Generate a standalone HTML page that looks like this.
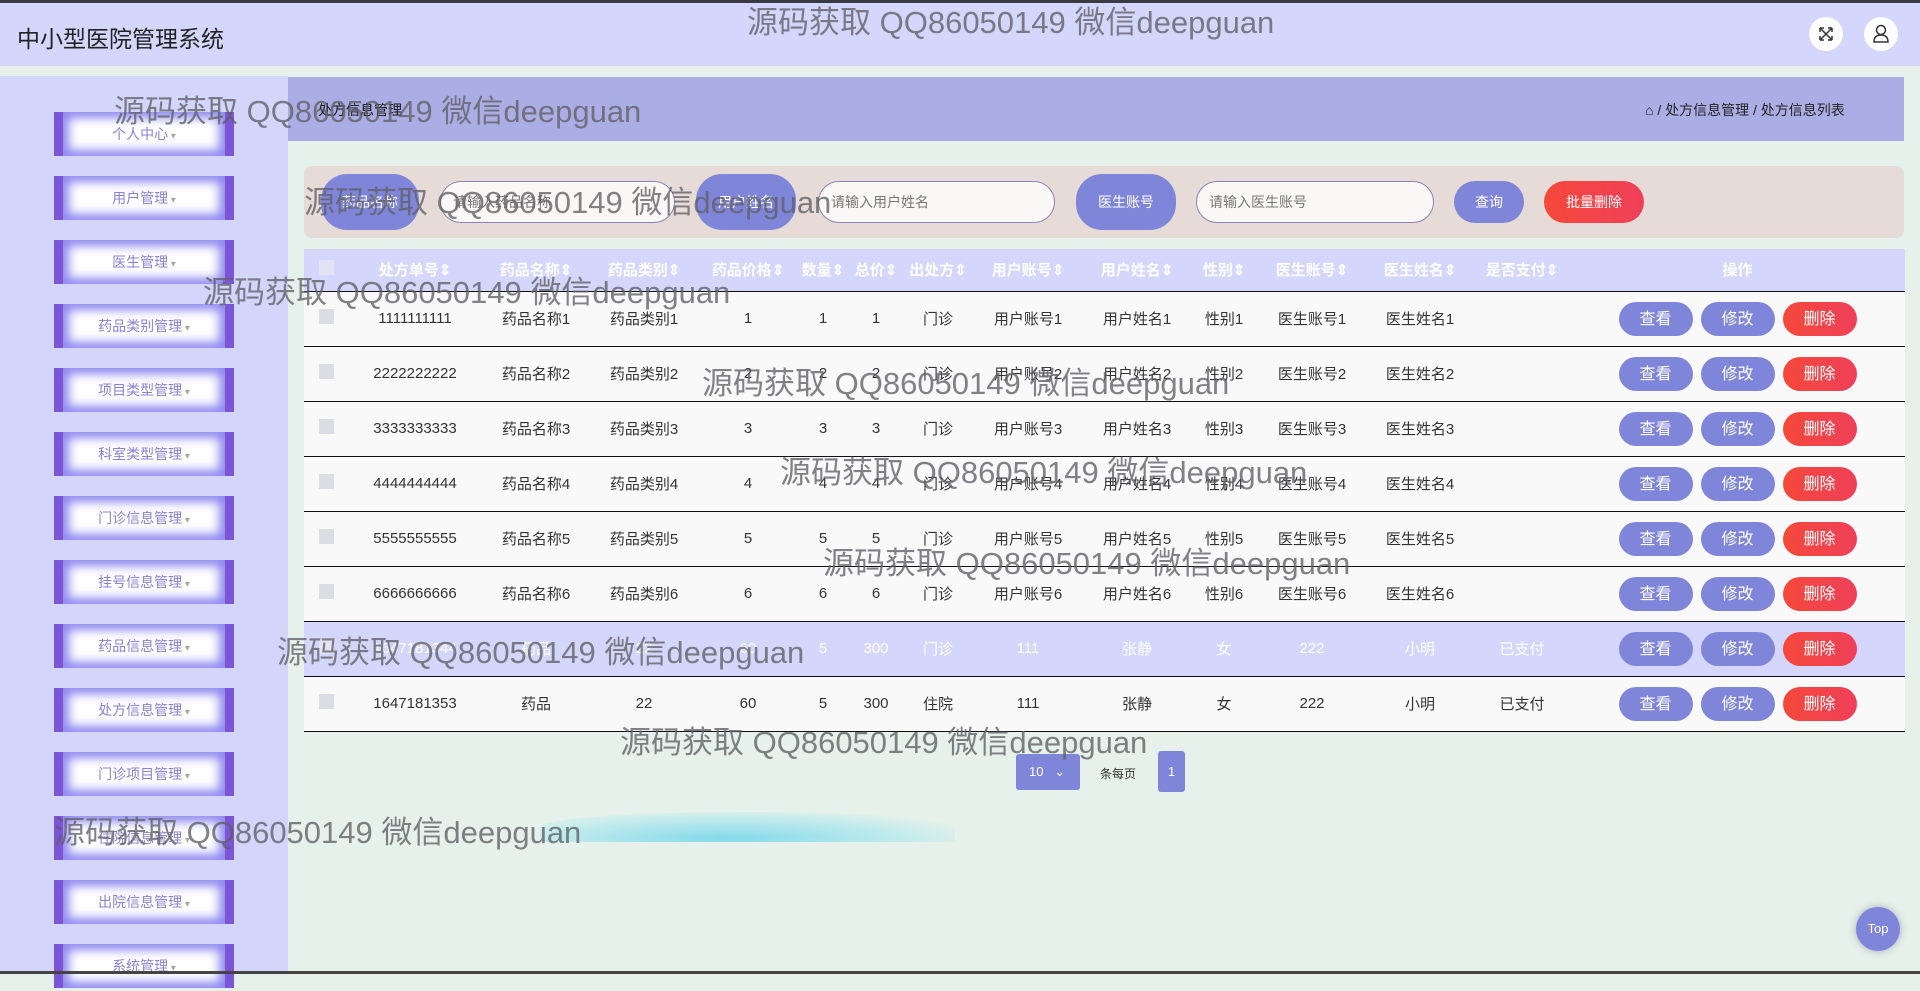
<!DOCTYPE html>
<html><head><meta charset="utf-8"><style>
*{box-sizing:border-box;margin:0;padding:0}
body{width:1920px;height:974px;overflow:hidden;background:#e5f1ea;font-family:"Liberation Sans","Noto Sans CJK SC",sans-serif;position:relative}
.a{position:absolute}
.hdr{left:0;top:0;width:1920px;height:66px;background:#d4d6fb;border-top:3px solid #3a3a44}
.title{left:17px;top:20px;font-size:23px;color:#222}
.ic{width:34px;height:34px;border-radius:50%;background:#fff;top:17px}
.side{left:0;top:76px;width:288px;height:898px;background:#d3d5fb}
.mi{left:54px;width:180px;height:44px;background:#fff;border-left:9px solid #7b55d6;border-right:9px solid #7b55d6;box-shadow:inset 0 0 10px 6px #8e88f0;color:#8a80d4;font-size:14px;text-align:center;line-height:44px}
.mi:after{content:" ▾";font-size:10px;color:#aaa}
.bc{left:288px;top:77px;width:1616px;height:64px;background:#abaee4}
.srch{left:304px;top:166px;width:1600px;height:72px;background:#e6dbd6;border-radius:8px}
.pill{background:#7f86d9;color:#fff;font-size:14px;text-align:center;border-radius:26px}
.inp{background:#faf8f6;border:1px solid #8a82b8;border-radius:22px;font-size:14px;color:#777;padding-left:12px;line-height:41px}
.wm{font-size:31px;color:rgba(95,95,100,.78);white-space:nowrap;z-index:10;font-family:"Liberation Sans","Noto Sans CJK SC",sans-serif}
table{position:absolute;left:304px;top:249px;width:1601px;border-collapse:collapse;font-size:15px;color:#333}
th{height:42px;background:#d4d6fb;color:#fff;font-weight:bold;font-size:15px}
td{height:55px;background:#f9f9f9;border-top:1px solid #111;border-bottom:1px solid #111;text-align:center}
tr.hl td{background:#d4d6fb;color:#fff}
.cb{display:inline-block;width:15px;height:15px;background:#dcdde2}
.b{display:inline-block;width:74px;height:34px;line-height:36px;border-radius:17px;color:#fff;background:#7f86d9;margin:0 4px;font-size:16px}
.r{background:linear-gradient(90deg,#f5483a,#f0405a)}
</style></head><body>
<div class="a hdr"></div>
<div class="a title">中小型医院管理系统</div>
<div class="a ic" style="left:1809px"><svg width="34" height="34"><path d="M11 11l12 12M23 11L11 23M11 11h4M11 11v4M23 23h-4M23 23v-4M23 11h-4M23 11v4M11 23h4M11 23v-4" stroke="#333" stroke-width="1.5" fill="none"/></svg></div>
<div class="a ic" style="left:1864px"><svg width="34" height="34"><circle cx="17" cy="13" r="4.5" stroke="#333" stroke-width="1.5" fill="none"/><path d="M10 25q0-7 7-7t7 7z" stroke="#333" stroke-width="1.5" fill="none"/></svg></div>
<div class="a side"></div>
<div class="a mi" style="top:112px">个人中心</div>
<div class="a mi" style="top:176px">用户管理</div>
<div class="a mi" style="top:240px">医生管理</div>
<div class="a mi" style="top:304px">药品类别管理</div>
<div class="a mi" style="top:368px">项目类型管理</div>
<div class="a mi" style="top:432px">科室类型管理</div>
<div class="a mi" style="top:496px">门诊信息管理</div>
<div class="a mi" style="top:560px">挂号信息管理</div>
<div class="a mi" style="top:624px">药品信息管理</div>
<div class="a mi" style="top:688px">处方信息管理</div>
<div class="a mi" style="top:752px">门诊项目管理</div>
<div class="a mi" style="top:816px">住院信息管理</div>
<div class="a mi" style="top:880px">出院信息管理</div>
<div class="a mi" style="top:944px">系统管理</div>
<div class="a bc"></div>
<div class="a" style="left:318px;top:100px;font-size:14px;color:#111">处方信息管理</div>
<div class="a" style="left:1645px;top:100px;font-size:14px;color:#222">⌂ / 处方信息管理 / 处方信息列表</div>
<div class="a srch"></div>
<div class="a pill" style="left:321px;top:174px;width:98px;height:56px;line-height:56px">药品名称</div>
<div class="a inp" style="left:440px;top:181px;width:235px;height:42px">请输入药品名称</div>
<div class="a pill" style="left:696px;top:174px;width:100px;height:56px;line-height:56px">用户姓名</div>
<div class="a inp" style="left:818px;top:181px;width:237px;height:42px">请输入用户姓名</div>
<div class="a pill" style="left:1076px;top:174px;width:100px;height:56px;line-height:56px">医生账号</div>
<div class="a inp" style="left:1196px;top:181px;width:238px;height:42px">请输入医生账号</div>
<div class="a pill" style="left:1454px;top:181px;width:70px;height:42px;line-height:42px">查询</div>
<div class="a pill" style="left:1544px;top:181px;width:100px;height:42px;line-height:42px;background:linear-gradient(90deg,#f5483a,#f0405a)">批量删除</div>
<table>
<tr><th style="width:44px"><span class="cb" style="background:#e2e3f5"></span></th><th style="width:134px">处方单号⇕</th><th style="width:108px">药品名称⇕</th><th style="width:108px">药品类别⇕</th><th style="width:100px">药品价格⇕</th><th style="width:50px">数量⇕</th><th style="width:56px">总价⇕</th><th style="width:68px">出处方⇕</th><th style="width:112px">用户账号⇕</th><th style="width:106px">用户姓名⇕</th><th style="width:68px">性别⇕</th><th style="width:108px">医生账号⇕</th><th style="width:108px">医生姓名⇕</th><th style="width:96px">是否支付⇕</th><th>操作</th></tr>
<tr><td><span class="cb"></span></td><td>1111111111</td><td>药品名称1</td><td>药品类别1</td><td>1</td><td>1</td><td>1</td><td>门诊</td><td>用户账号1</td><td>用户姓名1</td><td>性别1</td><td>医生账号1</td><td>医生姓名1</td><td></td><td><span class="b">查看</span><span class="b">修改</span><span class="b r">删除</span></td></tr>
<tr><td><span class="cb"></span></td><td>2222222222</td><td>药品名称2</td><td>药品类别2</td><td>2</td><td>2</td><td>2</td><td>门诊</td><td>用户账号2</td><td>用户姓名2</td><td>性别2</td><td>医生账号2</td><td>医生姓名2</td><td></td><td><span class="b">查看</span><span class="b">修改</span><span class="b r">删除</span></td></tr>
<tr><td><span class="cb"></span></td><td>3333333333</td><td>药品名称3</td><td>药品类别3</td><td>3</td><td>3</td><td>3</td><td>门诊</td><td>用户账号3</td><td>用户姓名3</td><td>性别3</td><td>医生账号3</td><td>医生姓名3</td><td></td><td><span class="b">查看</span><span class="b">修改</span><span class="b r">删除</span></td></tr>
<tr><td><span class="cb"></span></td><td>4444444444</td><td>药品名称4</td><td>药品类别4</td><td>4</td><td>4</td><td>4</td><td>门诊</td><td>用户账号4</td><td>用户姓名4</td><td>性别4</td><td>医生账号4</td><td>医生姓名4</td><td></td><td><span class="b">查看</span><span class="b">修改</span><span class="b r">删除</span></td></tr>
<tr><td><span class="cb"></span></td><td>5555555555</td><td>药品名称5</td><td>药品类别5</td><td>5</td><td>5</td><td>5</td><td>门诊</td><td>用户账号5</td><td>用户姓名5</td><td>性别5</td><td>医生账号5</td><td>医生姓名5</td><td></td><td><span class="b">查看</span><span class="b">修改</span><span class="b r">删除</span></td></tr>
<tr><td><span class="cb"></span></td><td>6666666666</td><td>药品名称6</td><td>药品类别6</td><td>6</td><td>6</td><td>6</td><td>门诊</td><td>用户账号6</td><td>用户姓名6</td><td>性别6</td><td>医生账号6</td><td>医生姓名6</td><td></td><td><span class="b">查看</span><span class="b">修改</span><span class="b r">删除</span></td></tr>
<tr class="hl"><td><span class="cb" style="background:#e2e3f5"></span></td><td>1647181344</td><td>药品</td><td>22</td><td>60</td><td>5</td><td>300</td><td>门诊</td><td>111</td><td>张静</td><td>女</td><td>222</td><td>小明</td><td>已支付</td><td><span class="b">查看</span><span class="b">修改</span><span class="b r">删除</span></td></tr>
<tr><td><span class="cb"></span></td><td>1647181353</td><td>药品</td><td>22</td><td>60</td><td>5</td><td>300</td><td>住院</td><td>111</td><td>张静</td><td>女</td><td>222</td><td>小明</td><td>已支付</td><td><span class="b">查看</span><span class="b">修改</span><span class="b r">删除</span></td></tr>
</table>
<div class="a" style="left:1016px;top:754px;width:64px;height:36px;background:#7f86d9;border-radius:3px;color:#fff;font-size:13px;line-height:36px;padding-left:13px">10 &nbsp;&nbsp;⌄</div>
<div class="a" style="left:1100px;top:765px;font-size:12px;color:#333">条每页</div>
<div class="a" style="left:1158px;top:751px;width:27px;height:41px;background:#7f86d9;border-radius:3px;color:#fff;font-size:13px;line-height:41px;text-align:center">1</div>
<div class="a" style="left:540px;top:812px;width:415px;height:30px;border-radius:50% 50% 0 0;background:radial-gradient(ellipse at 45% 90%,rgba(120,215,235,.9),rgba(160,230,240,.4) 60%,rgba(200,240,245,0) 80%)"></div>
<div class="a" style="left:1856px;top:907px;width:44px;height:44px;border-radius:50%;background:#7f86d9;box-shadow:0 0 8px #aab;color:#fff;font-size:13px;text-align:center;line-height:44px">Top</div>
<div class="a" style="left:0;top:971px;width:1920px;height:3px;background:#444"></div>
<div class="a wm" style="left:747px;top:-3px">源码获取 QQ86050149 微信deepguan</div>
<div class="a wm" style="left:114px;top:86px">源码获取 QQ86050149 微信deepguan</div>
<div class="a wm" style="left:304px;top:177px">源码获取 QQ86050149 微信deepguan</div>
<div class="a wm" style="left:203px;top:267px">源码获取 QQ86050149 微信deepguan</div>
<div class="a wm" style="left:702px;top:358px">源码获取 QQ86050149 微信deepguan</div>
<div class="a wm" style="left:780px;top:447px">源码获取 QQ86050149 微信deepguan</div>
<div class="a wm" style="left:823px;top:538px">源码获取 QQ86050149 微信deepguan</div>
<div class="a wm" style="left:277px;top:627px">源码获取 QQ86050149 微信deepguan</div>
<div class="a wm" style="left:620px;top:717px">源码获取 QQ86050149 微信deepguan</div>
<div class="a wm" style="left:54px;top:807px">源码获取 QQ86050149 微信deepguan</div>
</body></html>
